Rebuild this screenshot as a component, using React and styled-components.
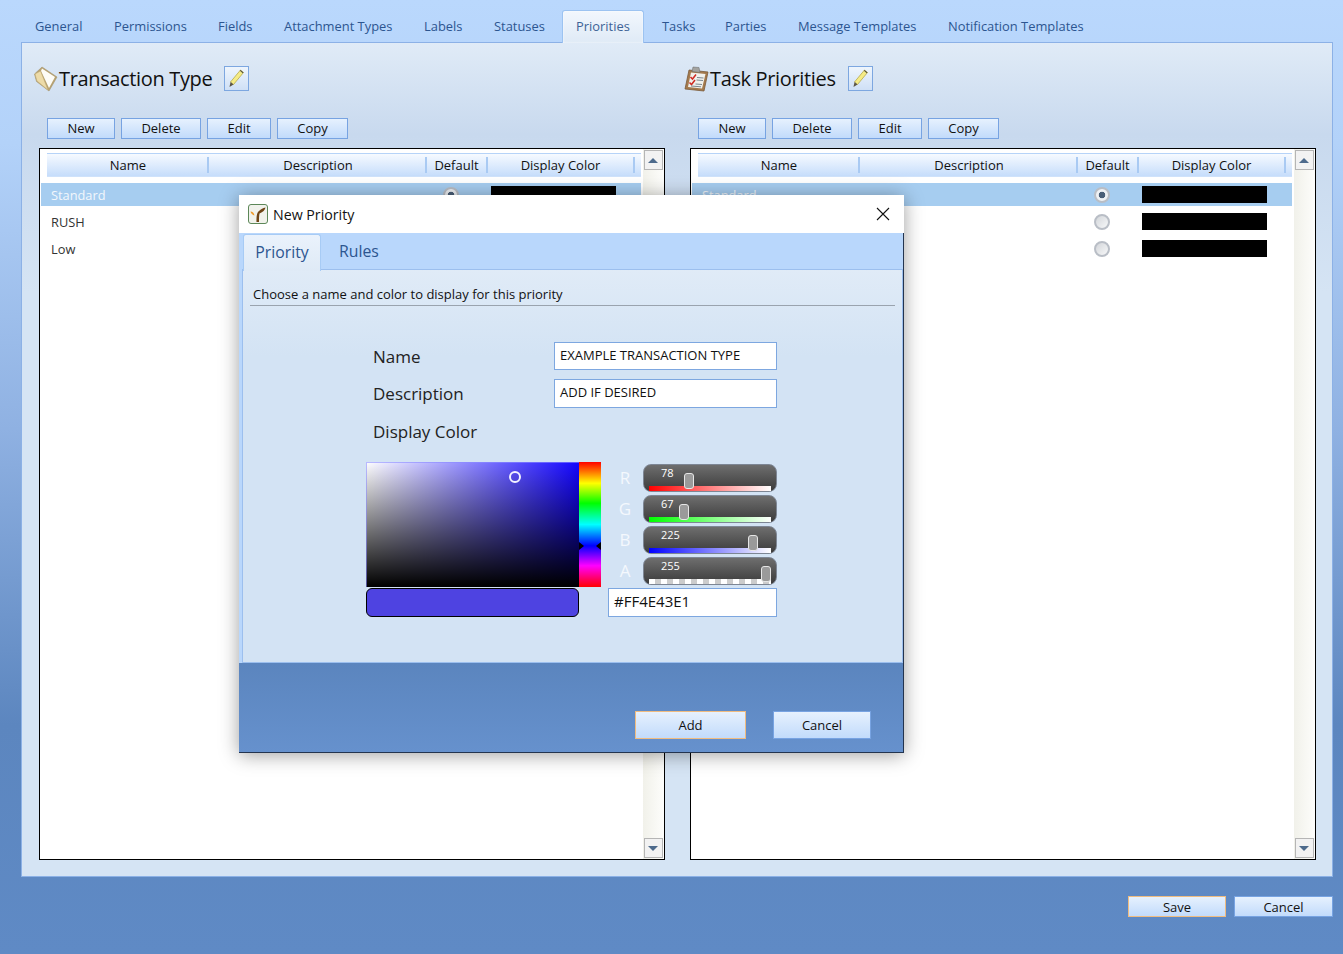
import React from "react";
import styled, { createGlobalStyle } from "styled-components";

const GlobalStyle = createGlobalStyle`
  html, body { margin: 0; padding: 0; }
  body { font-family: "Open Sans", "Liberation Sans", sans-serif; color: #111; }
`;

const Page = styled.div`
  position: relative;
  width: 1343px;
  height: 954px;
  overflow: hidden;
  padding-top: 10px;
  box-sizing: border-box;
  background: linear-gradient(to bottom, #bad8fd 0%, #b3d2f9 15%, #8fb1e2 45%, #5c86bf 76%, #5f8ac5 100%);
`;

const TabBar = styled.div`
  display: flex;
  height: 32px;
  padding-left: 22px;
  position: relative;
  z-index: 1;
`;

const Tab = styled.div`
  box-sizing: border-box;
  width: ${(p) => p.$w}px;
  height: ${(p) => (p.$active ? 33 : 32)}px;
  margin-right: ${(p) => p.$gap || 0}px;
  padding-left: 13px;
  font-size: 12.9px;
  line-height: ${(p) => (p.$active ? 31 : 33)}px;
  color: ${(p) => (p.$active ? "#3d6396" : "#2c5590")};
  white-space: nowrap;
  ${(p) =>
    p.$active &&
    `
    background: linear-gradient(to bottom, #f2f7fd, #dfeaf6);
    border: 1px solid #9cc3f1;
    border-bottom: none;
    border-radius: 3px 3px 0 0;
    box-shadow: inset 0 0 2px #fff;
  `}
`;

const MainPanel = styled.div`
  box-sizing: border-box;
  width: 1312px;
  height: 835px;
  margin-left: 21px;
  padding: 0 17px 16px;
  border: 1px solid #8cb1e6;
  background: linear-gradient(to bottom, #e0ebf7 0, #c8d9ee 11%, #d5e4f4 30%, #d5e4f4 100%);
  display: grid;
  grid-template-columns: 626px 626px;
  column-gap: 25px;
`;

const Column = styled.section`
  display: flex;
  flex-direction: column;
  min-height: 0;
`;

const TitleRow = styled.div`
  display: flex;
  align-items: center;
  height: 33px;
  margin: 19px 0 0 -6px;
`;

const Title = styled.h2`
  margin: 0 12px 0 1px;
  font-size: 20px;
  font-weight: 400;
  letter-spacing: -0.35px;
  line-height: 31px;
  color: #111;
  white-space: nowrap;
`;

const EditIconButton = styled.div`
  box-sizing: border-box;
  width: 25px;
  height: 25px;
  border: 1px solid #7da7e0;
  background: linear-gradient(to bottom, #eef5fd, #cfe0f6);
  display: flex;
  align-items: center;
  justify-content: center;
`;

const Toolbar = styled.div`
  display: flex;
  gap: 6px;
  margin: 23px 0 9px 8px;
`;

const SmallButton = styled.button`
  box-sizing: border-box;
  width: ${(p) => p.$w}px;
  height: ${(p) => p.$h || 21}px;
  padding: 0 0 ${(p) => p.$pb ?? 1}px;
  border: ${(p) => (p.$focused ? "1.5px solid #f0bc80" : "1px solid #77a3e2")};
  background: linear-gradient(to bottom, #e6f1fe, #c2dbfb);
  font-family: inherit;
  font-size: 13px;
  color: #111;
`;

const ListBox = styled.div`
  flex: 1;
  display: flex;
  min-height: 0;
  border: 1px solid #000;
  background: #fff;
`;

const ListBody = styled.div`
  flex: 1;
  min-width: 0;
  padding-top: 4px;
`;

const HeaderRow = styled.div`
  display: flex;
  align-items: center;
  box-sizing: border-box;
  height: 24px;
  margin: 0 0 6px 7px;
  width: 594px;
  border-top: 1px solid #b6d3f8;
  border-bottom: 1px solid #cfe2fb;
  background: linear-gradient(to bottom, #f6faff, #c6ddfb);
`;

const HeaderCell = styled.div`
  box-sizing: border-box;
  width: ${(p) => p.$w}px;
  height: 16px;
  padding-left: ${(p) => p.$pad || 0}px;
  line-height: 17px;
  text-align: center;
  font-size: 13px;
  color: #111;
  border-right: 2px solid #a9caf3;
  white-space: nowrap;
`;

const Row = styled.div`
  display: flex;
  align-items: center;
  box-sizing: border-box;
  height: 23px;
  width: 600px;
  margin: 0 0 4px 1px;
  background: ${(p) => (p.$selected ? "#a6cdf0" : "transparent")};
  color: ${(p) => (p.$selected ? "#f2f7fc" : "#333")};
  font-size: 12.8px;
  line-height: 24px;
`;

const RowName = styled.div`
  width: 379px;
  height: 23px;
  padding-left: 10px;
  box-sizing: border-box;
`;

const RadioCell = styled.div`
  width: 61px;
  display: flex;
  justify-content: center;
`;

const Radio = styled.div`
  box-sizing: border-box;
  width: 16px;
  height: 16px;
  border-radius: 50%;
  border: 2px solid #b9bec6;
  background: ${(p) =>
    p.$on
      ? "radial-gradient(circle, #4a5f78 0, #4a5f78 3px, #eef1f4 3.6px)"
      : "linear-gradient(135deg, #d3d6da, #f7f8f9)"};
`;

const ColorBar = styled.div`
  width: 125px;
  height: 17px;
  margin-left: 10px;
  background: ${(p) => p.$color};
`;

const Scrollbar = styled.div`
  width: 21px;
  padding: 1px 1px 1px 0;
  box-sizing: border-box;
  display: flex;
  flex-direction: column;
  justify-content: space-between;
  align-items: center;
  background: linear-gradient(to right, #f1f1ea, #fdfdfb);
`;

const ScrollButton = styled.div`
  box-sizing: border-box;
  width: 19px;
  height: 20px;
  border: 1px solid #b5b5b5;
  background: #f2f2f2;
  display: flex;
  align-items: center;
  justify-content: center;
`;

const Arrow = styled.div`
  width: 0;
  height: 0;
  border-left: 5px solid transparent;
  border-right: 5px solid transparent;
  ${(p) => (p.$down ? "border-top: 5px solid #4d6a8c;" : "border-bottom: 5px solid #4d6a8c;")}
`;

const BottomBar = styled.div`
  display: flex;
  justify-content: flex-end;
  gap: 8px;
  margin-top: 19px;
  padding-right: 10px;
`;

/* dialog sits over the page */
const Dialog = styled.div`
  position: absolute;
  left: 239px;
  top: 195px;
  width: 665px;
  height: 558px;
  box-sizing: border-box;
  display: flex;
  flex-direction: column;
  border-right: 1px solid #23344f;
  border-bottom: 1px solid #23344f;
  background: #b9d7fc;
  box-shadow: 0 2px 18px rgba(0, 0, 0, 0.38);
`;

const DialogTitleBar = styled.div`
  display: flex;
  align-items: center;
  height: 38px;
  flex: none;
  margin-right: -1px;
  padding: 0 14px 0 9px;
  background: #fff;
  font-size: 14.2px;
  color: #111;
`;

const DialogTitle = styled.span`
  flex: 1;
  margin-left: 5px;
`;

const DialogTabs = styled.div`
  display: flex;
  height: 36px;
  flex: none;
  padding-left: 4px;
  position: relative;
  z-index: 1;
`;

const DialogTab = styled.div`
  box-sizing: border-box;
  width: ${(p) => p.$w}px;
  height: ${(p) => (p.$active ? 37 : 36)}px;
  margin-top: 1px;
  text-align: center;
  font-size: 15.8px;
  line-height: 34px;
  color: #2c5590;
  ${(p) =>
    p.$active &&
    `
    background: linear-gradient(to bottom, #eaf2fc, #dfeaf6);
    border: 1px solid #a7cbf5;
    border-bottom: none;
    border-radius: 3px 3px 0 0;
  `}
`;

const DialogContent = styled.div`
  box-sizing: border-box;
  height: 394px;
  flex: none;
  margin: 0 0 0 3px;
  border: 1px solid #9cbfee;
  background: linear-gradient(to bottom, #e0ebf7 0, #d3e3f4 22%, #d3e3f4 100%);
`;

const Instruction = styled.div`
  box-sizing: border-box;
  height: 36px;
  margin: 0 7px 0 7px;
  padding: 15px 0 0 3px;
  border-bottom: 1px solid #9aa3ae;
  font-size: 13px;
  line-height: 18px;
  color: #111;
`;

const Form = styled.div`
  display: grid;
  grid-template-columns: 181px 223px;
  row-gap: 9px;
  margin: 36px 0 0 130px;
`;

const FieldLabel = styled.label`
  height: 28px;
  font-size: 17px;
  line-height: 30px;
  color: #222;
  white-space: nowrap;
`;

const TextBox = styled.div`
  box-sizing: border-box;
  height: ${(p) => p.$h || 28}px;
  padding-left: 5px;
  border: 1px solid #7da7e0;
  background: #fff;
  font-size: ${(p) => p.$size || 13}px;
  line-height: 25px;
  color: #111;
  white-space: nowrap;
`;

const Picker = styled.div`
  display: grid;
  grid-template-columns: 235px 169px;
  column-gap: 7px;
  margin: 17px 0 0 123px;
`;

const PickerLeft = styled.div`
  display: flex;
  flex-direction: column;
`;

const SpectrumRow = styled.div`
  display: flex;
  height: 125px;
`;

const Spectrum = styled.div`
  position: relative;
  width: 213px;
  box-shadow: inset 1px 1px 0 rgba(140, 140, 255, 0.6);
  background: linear-gradient(to top, #000, rgba(0, 0, 0, 0)),
    linear-gradient(to right, #fff, #1406ff);
`;

const SpectrumHandle = styled.div`
  position: absolute;
  left: 143px;
  top: 9px;
  width: 12px;
  height: 12px;
  box-sizing: border-box;
  border: 2px solid #f2f2ff;
  border-radius: 50%;
`;

const HueBar = styled.div`
  position: relative;
  width: 22px;
  background: linear-gradient(to bottom, #f00 0%, #ff0 17%, #0f0 33%, #0ff 50%, #00f 67%, #f0f 83%, #f00 100%);
`;

const HueMark = styled.div`
  position: absolute;
  top: 80px;
  ${(p) => (p.$right ? "right: 0;" : "left: 0;")}
  width: 0;
  height: 0;
  border-top: 4px solid transparent;
  border-bottom: 4px solid transparent;
  ${(p) => (p.$right ? "border-right: 5px solid #000;" : "border-left: 5px solid #000;")}
`;

const Preview = styled.div`
  box-sizing: border-box;
  width: 213px;
  height: 29px;
  margin-top: 1px;
  border: 1px solid #000;
  border-radius: 6px;
  background: #4e43e1;
`;

const PickerRight = styled.div`
  display: flex;
  flex-direction: column;
  padding-top: 2px;
`;

const Channel = styled.div`
  display: flex;
  align-items: center;
  height: 28px;
  margin-bottom: 3px;
`;

const ChannelLabel = styled.div`
  width: 34px;
  margin-right: 1px;
  box-sizing: border-box;
  text-align: center;
  font-size: 17px;
  line-height: 30px;
  color: #f4f8fd;
`;

const SliderTrack = styled.div`
  position: relative;
  box-sizing: border-box;
  width: 134px;
  height: 28px;
  border: 1.5px solid #7d8694;
  border-radius: 8px;
  background: linear-gradient(to bottom, #6e6e6e, #3b3b3b);
`;

const SliderValue = styled.span`
  position: absolute;
  left: 17px;
  top: 0;
  font-size: 11px;
  line-height: 15px;
  color: #fff;
`;

const SliderRamp = styled.div`
  position: absolute;
  left: 5px;
  right: 5px;
  bottom: 0;
  height: 5px;
  background: ${(p) => p.$bg};
`;

const SliderThumb = styled.div`
  position: absolute;
  top: 8px;
  width: 10px;
  height: 16px;
  box-sizing: border-box;
  border: 1px solid #e6e6e6;
  border-radius: 3px;
  background: #9a9a9a;
`;

const DialogFooter = styled.div`
  flex: 1;
  display: flex;
  justify-content: flex-end;
  align-items: flex-end;
  gap: 27px;
  padding: 0 32px 13px 0;
  background: linear-gradient(to bottom, #5b85be, #6691cd);
`;

const FolderIcon = () => (
  <svg width="25" height="26" viewBox="0 0 25 26">
    <path d="M1.5 8 L9 1 L24 11 L16 25 L3.5 15.5 Z" fill="#b8a270" stroke="#a2946f" strokeWidth="0.6" />
    <path d="M9 2.5 L22 11 L16 22 L8 5 Z" fill="#fdfcf6" />
    <path d="M2 8 L7.5 5 L15 24 L4 15 Z" fill="#eddba8" stroke="#bda873" strokeWidth="0.5" />
  </svg>
);

const ClipboardIcon = () => (
  <svg width="25" height="26" viewBox="0 0 25 26">
    <path d="M5 4 L24 6 L20 25 L1 23 Z" fill="#a47a4d" stroke="#7a5a3a" strokeWidth="0.8" />
    <path d="M7 6.5 L21.5 8 L18 22.5 L4 21 Z" fill="#f1f1ec" />
    <path d="M9 1 L15 1.5 L16 6.5 L8 5.5 Z" fill="#a3a3a0" stroke="#666" strokeWidth="0.5" />
    <path d="M6.5 11 L8.5 13 L12 8.5 M5.5 16.5 L7.5 18.5 L11 14" fill="none" stroke="#cf2a22" strokeWidth="1.5" />
    <path d="M13 11.5 L19.5 12 M12.5 14 L19 14.5 M11.5 18 L18 18.5 M7 20 L17 20.8" fill="none" stroke="#7c8790" strokeWidth="1" />
  </svg>
);

const PencilIcon = () => (
  <svg width="17" height="19" viewBox="0 0 17 19">
    <path d="M12.5 1 L15.5 3.5 L5.5 15.5 L2.5 13 Z" fill="#f5ec86" stroke="#b7a94a" strokeWidth="0.8" />
    <path d="M11.8 1.8 L14.8 4.3 L15.5 3.5 L12.5 1 Z" fill="#4a4a42" />
    <path d="M2.5 13 L5.5 15.5 L1.5 18 Z" fill="#5c5648" />
  </svg>
);

const AppIcon = () => (
  <svg width="20" height="20" viewBox="0 0 20 20">
    <rect x="0.5" y="0.5" width="19" height="19" rx="2.5" fill="#f1f2ec" stroke="#5c8758" />
    <path d="M8.5 18 C8.5 13 8.5 9 11 7 C13 5 15 4 17.5 3.5 C17 6 15 8 11.5 9.5 C11 12 11 15 11 18 Z" fill="#6f4416" />
    <path d="M2.5 7.5 C4.5 7.5 6 9 6.5 11.5 C4.5 11 3 9.5 2.5 7.5 Z" fill="#ef9a2a" />
  </svg>
);

const tabs = [
  { label: "General", w: 79 },
  { label: "Permissions", w: 104 },
  { label: "Fields", w: 66 },
  { label: "Attachment Types", w: 140 },
  { label: "Labels", w: 70 },
  { label: "Statuses", w: 81 },
  { label: "Priorities", w: 82, active: true, gap: 5 },
  { label: "Tasks", w: 63 },
  { label: "Parties", w: 73 },
  { label: "Message Templates", w: 150 },
  { label: "Notification Templates", w: 170 },
];

const toolButtons = [
  { label: "New", w: 68 },
  { label: "Delete", w: 80 },
  { label: "Edit", w: 64 },
  { label: "Copy", w: 71 },
];

const rows = [
  { name: "Standard", selected: true },
  { name: "RUSH" },
  { name: "Low" },
];

const channels = [
  { label: "R", value: 78, pos: 40, ramp: "linear-gradient(to right, #f00, #fff)" },
  { label: "G", value: 67, pos: 35, ramp: "linear-gradient(to right, #0f0, #fff)" },
  { label: "B", value: 225, pos: 104, ramp: "linear-gradient(to right, #00f, #fff)" },
  {
    label: "A",
    value: 255,
    pos: 117,
    ramp: "repeating-linear-gradient(to right, #fff 0, #fff 6px, #ccc 6px, #ccc 12px)",
  },
];

const ListPanel = ({ title, icon }) => (
  <Column>
    <TitleRow>
      {icon}
      <Title>{title}</Title>
      <EditIconButton>
        <PencilIcon />
      </EditIconButton>
    </TitleRow>
    <Toolbar>
      {toolButtons.map((b) => (
        <SmallButton key={b.label} $w={b.w}>
          {b.label}
        </SmallButton>
      ))}
    </Toolbar>
    <ListBox>
      <ListBody>
        <HeaderRow>
          <HeaderCell $w={162} $pad={2}>Name</HeaderCell>
          <HeaderCell $w={218} $pad={2}>Description</HeaderCell>
          <HeaderCell $w={61}>Default</HeaderCell>
          <HeaderCell $w={147}>Display Color</HeaderCell>
        </HeaderRow>
        {rows.map((r) => (
          <Row key={r.name} $selected={r.selected}>
            <RowName>{r.name}</RowName>
            <RadioCell>
              <Radio $on={r.selected} />
            </RadioCell>
            <ColorBar $color="#000" />
          </Row>
        ))}
      </ListBody>
      <Scrollbar>
        <ScrollButton>
          <Arrow />
        </ScrollButton>
        <ScrollButton>
          <Arrow $down />
        </ScrollButton>
      </Scrollbar>
    </ListBox>
  </Column>
);

export default function App() {
  return (
    <Page>
      <GlobalStyle />
      <TabBar>
        {tabs.map((t) => (
          <Tab key={t.label} $w={t.w} $active={t.active} $gap={t.gap}>
            {t.label}
          </Tab>
        ))}
      </TabBar>
      <MainPanel>
        <ListPanel title="Transaction Type" icon={<FolderIcon />} />
        <ListPanel title="Task Priorities" icon={<ClipboardIcon />} />
      </MainPanel>
      <BottomBar>
        <SmallButton $w={98} $pb={0} $focused>
          Save
        </SmallButton>
        <SmallButton $w={99} $pb={0}>
          Cancel
        </SmallButton>
      </BottomBar>

      <Dialog>
        <DialogTitleBar>
          <AppIcon />
          <DialogTitle>New Priority</DialogTitle>
          <svg width="14" height="14" viewBox="0 0 14 14">
            <path d="M1 1 L13 13 M13 1 L1 13" stroke="#111" strokeWidth="1.1" />
          </svg>
        </DialogTitleBar>
        <DialogTabs>
          <DialogTab $w={78} $active>
            Priority
          </DialogTab>
          <DialogTab $w={76}>Rules</DialogTab>
        </DialogTabs>
        <DialogContent>
          <Instruction>Choose a name and color to display for this priority</Instruction>
          <Form>
            <FieldLabel>Name</FieldLabel>
            <TextBox>EXAMPLE TRANSACTION TYPE</TextBox>
            <FieldLabel>Description</FieldLabel>
            <TextBox $h={29}>ADD IF DESIRED</TextBox>
            <FieldLabel>Display Color</FieldLabel>
          </Form>
          <Picker>
            <PickerLeft>
              <SpectrumRow>
                <Spectrum>
                  <SpectrumHandle />
                </Spectrum>
                <HueBar>
                  <HueMark />
                  <HueMark $right />
                </HueBar>
              </SpectrumRow>
              <Preview />
            </PickerLeft>
            <PickerRight>
              {channels.map((c) => (
                <Channel key={c.label}>
                  <ChannelLabel>{c.label}</ChannelLabel>
                  <SliderTrack>
                    <SliderValue>{c.value}</SliderValue>
                    <SliderRamp $bg={c.ramp} />
                    <SliderThumb style={{ left: c.pos }} />
                  </SliderTrack>
                </Channel>
              ))}
              <TextBox $h={29} $size={15}>
                #FF4E43E1
              </TextBox>
            </PickerRight>
          </Picker>
        </DialogContent>
        <DialogFooter>
          <SmallButton $w={111} $h={28} $focused>
            Add
          </SmallButton>
          <SmallButton $w={98} $h={28}>
            Cancel
          </SmallButton>
        </DialogFooter>
      </Dialog>
    </Page>
  );
}
